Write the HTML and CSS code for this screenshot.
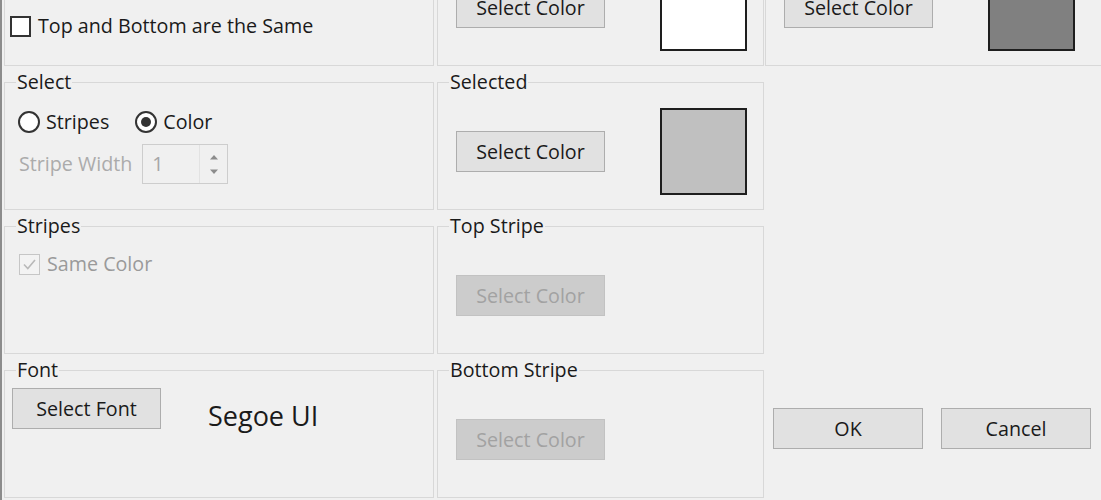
FILE: index.html
```html
<!DOCTYPE html>
<html lang="en">
<head>
<meta charset="utf-8">
<title>Stripe Settings</title>
<link rel="stylesheet" href="styles.css">
</head>
<body>
<div class="frame">
  <div class="grid">
    <fieldset class="group group-nolegend">
      <div class="body body-options">
        <label class="check-row">
          <span class="checkbox"></span>
          <span>Top and Bottom are the Same</span>
        </label>
      </div>
    </fieldset>

    <fieldset class="group group-nolegend">
      <div class="body body-color">
        <button class="btn">Select Color</button>
        <span class="swatch swatch-white"></span>
      </div>
    </fieldset>

    <fieldset class="group group-nolegend group-last">
      <div class="body body-color">
        <button class="btn">Select Color</button>
        <span class="swatch swatch-dark"></span>
      </div>
    </fieldset>

    <fieldset class="group">
      <legend>Select</legend>
      <div class="body body-select">
        <div class="radio-row">
          <label class="radio-item">
            <span class="radio"></span>
            <span>Stripes</span>
          </label>
          <label class="radio-item radio-item-second">
            <span class="radio radio-on"><span class="radio-dot"></span></span>
            <span>Color</span>
          </label>
        </div>
        <div class="width-row">
          <span class="label-disabled">Stripe Width</span>
          <div class="spinbox">
            <span class="spin-value">1</span>
            <span class="spin-buttons">
              <svg class="spin-arrow" width="10" height="6" viewBox="0 0 10 6"><path d="M1 5.5 L5 1 L9 5.5 Z" fill="#8c8c8c"/></svg>
              <svg class="spin-arrow" width="10" height="6" viewBox="0 0 10 6"><path d="M1 0.5 L5 5 L9 0.5 Z" fill="#8c8c8c"/></svg>
            </span>
          </div>
        </div>
      </div>
    </fieldset>

    <fieldset class="group">
      <legend>Selected</legend>
      <div class="body body-color">
        <button class="btn">Select Color</button>
        <span class="swatch swatch-silver"></span>
      </div>
    </fieldset>

    <div class="cell-empty"></div>

    <fieldset class="group">
      <legend>Stripes</legend>
      <div class="body body-stripes">
        <label class="check-row check-row-disabled">
          <span class="checkbox checkbox-disabled">
            <svg width="17" height="17" viewBox="0 0 17 17"><path d="M3 8.5 L6.8 12.5 L14 4" fill="none" stroke="#b9b9b9" stroke-width="1.6"/></svg>
          </span>
          <span>Same Color</span>
        </label>
      </div>
    </fieldset>

    <fieldset class="group">
      <legend>Top Stripe</legend>
      <div class="body body-color">
        <button class="btn" disabled>Select Color</button>
      </div>
    </fieldset>

    <div class="cell-empty"></div>

    <fieldset class="group">
      <legend>Font</legend>
      <div class="body body-font">
        <button class="btn">Select Font</button>
        <span class="font-name">Segoe UI</span>
      </div>
    </fieldset>

    <fieldset class="group">
      <legend>Bottom Stripe</legend>
      <div class="body body-color">
        <button class="btn" disabled>Select Color</button>
      </div>
    </fieldset>

    <div class="actions">
      <button class="btn btn-action">OK</button>
      <button class="btn btn-action">Cancel</button>
    </div>
  </div>
</div>
</body>
</html>
```

FILE: styles.css
```css
html, body {
  margin: 0;
  padding: 0;
  background: #f0f0f0;
  overflow: hidden;
  height: 500px;
}

body {
  font-family: "Open Sans", "Noto Sans", sans-serif;
  font-size: 19.7px;
  color: #1a1a1a;
}

.frame {
  height: 500px;
  border-left: 2px solid #8c8c8c;
  overflow: hidden;
}

.grid {
  display: grid;
  grid-template-columns: 433px 330px 345px;
  grid-template-rows: repeat(4, 144px);
  margin-top: -76px;
}

.group {
  margin: 2px 1px 2px 2px;
  padding: 0;
  min-width: 0;
  border: 1px solid #d8d8d8;
  display: flex;
  flex-direction: column;
}

.group-nolegend {
  padding-top: 23px;
}

.group-last {
  margin-left: 0;
}

.group legend {
  margin-left: 11px;
  padding: 0 1px;
  line-height: 24px;
  font-size: 19.7px;
  color: #1a1a1a;
}

.body {
  flex: 1;
  display: flex;
}

/* colour picker groups */
.body-color {
  align-items: center;
  padding-left: 18px;
  gap: 55px;
}

.btn {
  width: 149px;
  height: 41px;
  box-sizing: border-box;
  background: #e1e1e1;
  border: 1px solid #adadad;
  border-radius: 0;
  padding: 0;
  font-family: inherit;
  font-size: 19.7px;
  color: #1a1a1a;
}

.btn:disabled {
  background: #cccccc;
  border-color: #c2c2c2;
  color: #a2a2a2;
}

.swatch {
  width: 87px;
  height: 87px;
  box-sizing: border-box;
  border: 2px solid #1e1e1e;
}

.swatch-white { background: #ffffff; }
.swatch-silver { background: #c0c0c0; }
.swatch-dark { background: #808080; }

/* checkboxes */
.check-row {
  display: flex;
  align-items: center;
  gap: 7px;
  line-height: 24px;
}

.checkbox {
  width: 21px;
  height: 21px;
  box-sizing: border-box;
  border: 2px solid #333333;
  background: #ffffff;
  display: flex;
  align-items: center;
  justify-content: center;
}

.checkbox-disabled {
  border: 1px solid #c6c6c6;
  background: #f3f3f3;
}

.check-row-disabled {
  color: #9a9a9a;
}

.body-options {
  padding: 64px 0 0 5px;
  align-items: flex-start;
}

.body-stripes {
  padding: 14px 0 0 14px;
  align-items: flex-start;
}

/* select group */
.body-select {
  flex-direction: column;
  padding: 16px 0 0 13px;
}

.radio-row {
  display: flex;
  align-items: center;
  line-height: 24px;
}

.radio-item {
  display: flex;
  align-items: center;
  gap: 6px;
}

.radio-item-second {
  margin-left: 26px;
}

.radio {
  width: 22px;
  height: 22px;
  box-sizing: border-box;
  border: 2px solid #333333;
  border-radius: 50%;
  background: #ffffff;
  display: flex;
  align-items: center;
  justify-content: center;
}

.radio-dot {
  width: 10px;
  height: 10px;
  border-radius: 50%;
  background: #333333;
}

.width-row {
  display: flex;
  align-items: center;
  margin-top: 10px;
  margin-left: 1px;
  gap: 10px;
  line-height: 24px;
}

.label-disabled {
  color: #ababab;
}

.spinbox {
  width: 86px;
  height: 40px;
  box-sizing: border-box;
  border: 1px solid #cdcdcd;
  background: #f0f0f0;
  display: flex;
  align-items: center;
}

.spin-value {
  flex: 1;
  padding-left: 9px;
  color: #a6a6a6;
}

.spin-buttons {
  width: 28px;
  height: 100%;
  border-left: 1px solid #e2e2e2;
  display: flex;
  flex-direction: column;
  align-items: center;
  justify-content: space-around;
  padding: 4px 0;
  box-sizing: border-box;
}

/* font group */
.body-font {
  padding: 6px 0 0 7px;
  align-items: flex-start;
  gap: 47px;
}

.font-name {
  font-size: 27px;
  line-height: 27px;
  margin-top: 14px;
  color: #1a1a1a;
}

/* OK / Cancel */
.cell-empty {
  min-width: 0;
}

.actions {
  display: flex;
  align-items: center;
  padding-left: 8px;
  gap: 18px;
}

.btn-action {
  width: 150px;
}
```
